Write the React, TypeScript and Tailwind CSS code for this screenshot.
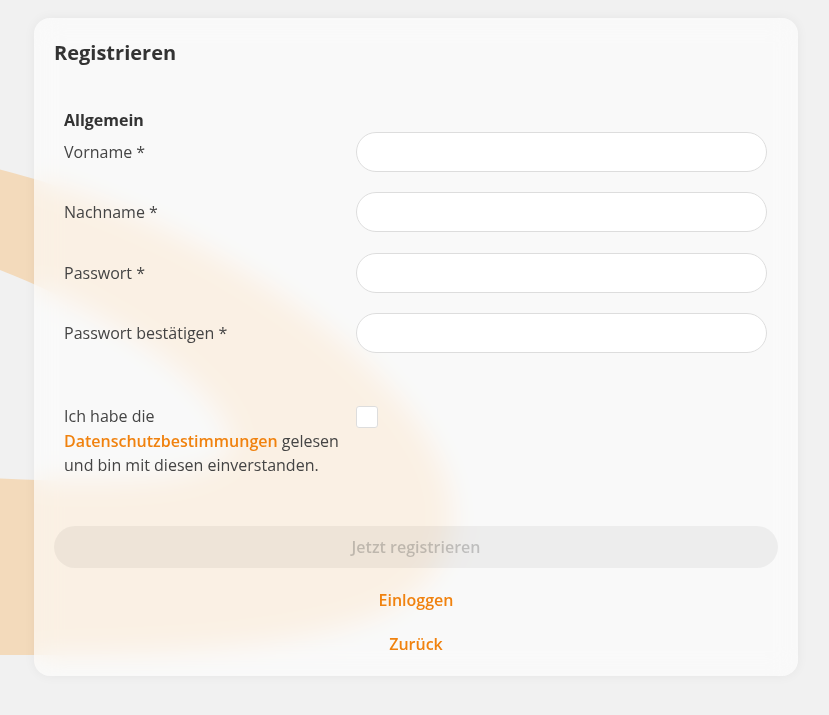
import React from "react";

const font = { fontFamily: '"Open Sans", "Noto Sans", sans-serif' };

function Swoosh() {
  return (
    <svg
      className="absolute left-0 top-0 pointer-events-none"
      width="829"
      height="715"
      viewBox="0 0 829 715"
      fill="none"
    >
      <path
        d="M -10 167 C 130 200, 300 285, 395 395 C 470 480, 475 565, 385 612 C 300 650, 150 656, -10 655 L -10 478 C 80 482, 190 488, 228 455 C 250 425, 170 335, -10 266 Z"
        fill="#f3dabb"
      />
    </svg>
  );
}

function Field({ label }: { label: string }) {
  return (
    <div className="flex items-center h-10">
      <label className="w-[292px] shrink-0 text-base text-[#444]">{label}</label>
      <input
        type="text"
        className="h-10 w-[411px] rounded-full border border-[#dddddd] bg-white px-4 outline-none"
      />
    </div>
  );
}

export default function App() {
  return (
    <div className="relative min-h-[715px] w-full overflow-hidden bg-[#f1f1f1]" style={font}>
      <Swoosh />
      <div className="relative z-10 pl-[34px] pt-[18px] pr-[31px]">
        <div className="flex h-[658px] w-[764px] flex-col rounded-2xl bg-white/60 px-5 pt-5 shadow-[0_0_12px_rgba(0,0,0,0.05)] backdrop-blur-[14px]">
          <h1 className="text-[20px] font-bold leading-[30px] text-[#333]">Registrieren</h1>

          <div className="mt-10 px-[10px]">
            <div className="text-base font-bold leading-6 text-[#333]">Allgemein</div>
            <div className="flex flex-col gap-[20.4px]">
              <Field label="Vorname *" />
              <Field label="Nachname *" />
              <Field label="Passwort *" />
              <Field label="Passwort bestätigen *" />
            </div>

            <div className="mt-[51px] flex items-start">
              <p className="w-[292px] shrink-0 pr-3 text-base leading-[24.5px] text-[#444]">
                Ich habe die{" "}
                <a className="font-semibold text-[#f0820f]">Datenschutzbestimmungen</a> gelesen
                und bin mit diesen einverstanden.
              </p>
              <div className="mt-[2px] h-[22px] w-[22px] rounded-[3px] border border-[#dddddd] bg-white" />
            </div>
          </div>

          <button
            disabled
            className="mt-[48px] h-[42px] w-full rounded-full bg-black/[0.05] text-base font-semibold text-black/20"
          >
            Jetzt registrieren
          </button>

          <div className="mt-5 flex flex-col items-center gap-5">
            <a className="text-base font-semibold leading-6 text-[#f0820f]">Einloggen</a>
            <a className="text-base font-semibold leading-6 text-[#f0820f]">Zurück</a>
          </div>
        </div>
      </div>
    </div>
  );
}
